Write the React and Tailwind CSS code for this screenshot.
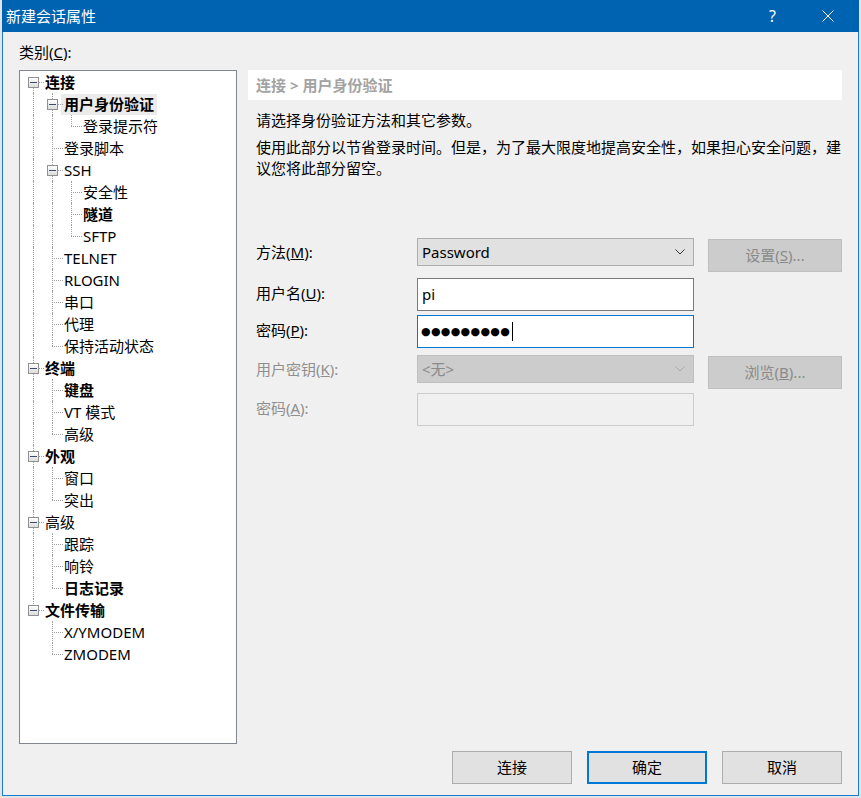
import { Fragment } from 'react'

const TREE = [
  {
    t: '连接', b: true, c: [
      { t: '用户身份验证', b: true, sel: true, c: [{ t: '登录提示符' }] },
      { t: '登录脚本' },
      { t: 'SSH', c: [{ t: '安全性' }, { t: '隧道', b: true }, { t: 'SFTP' }] },
      { t: 'TELNET' },
      { t: 'RLOGIN' },
      { t: '串口' },
      { t: '代理' },
      { t: '保持活动状态' },
    ],
  },
  { t: '终端', b: true, c: [{ t: '键盘', b: true }, { t: 'VT 模式' }, { t: '高级' }] },
  { t: '外观', b: true, c: [{ t: '窗口' }, { t: '突出' }] },
  { t: '高级', c: [{ t: '跟踪' }, { t: '响铃' }, { t: '日志记录', b: true }] },
  { t: '文件传输', b: true, c: [{ t: 'X/YMODEM' }, { t: 'ZMODEM' }] },
]

// guide x per level, box x per level, label padding per level
const LINE_X = ['left-[13px]', 'left-[32px]', 'left-[51px]']
const BOX_X = ['left-[8px]', 'left-[27px]', 'left-[46px]']
const PAD = ['pl-[22px]', 'pl-[41px]', 'pl-[60px]']

const DOT = 'border-dotted border-[#a0a0a0]'

function flatten(nodes, level, cont, out) {
  nodes.forEach((n, i) => {
    const last = i === nodes.length - 1
    out.push({ ...n, level, last, first: level === 0 && i === 0, cont })
    if (n.c) flatten(n.c, level + 1, [...cont, !last], out)
  })
  return out
}

function TreeRow({ r }) {
  const own = r.first ? 'top-[11px] h-[11px]' : r.last ? 'top-0 h-[11px]' : 'top-0 h-[22px]'
  return (
    <div className="relative h-[22px] flex items-center">
      {r.cont.map((c, k) =>
        c ? <span key={k} className={`absolute top-0 h-[22px] border-l ${DOT} ${LINE_X[k]}`} /> : null
      )}
      <span className={`absolute border-l ${DOT} ${own} ${LINE_X[r.level]}`} />
      <span className={`absolute top-[11px] w-[11px] border-t ${DOT} ${LINE_X[r.level]}`} />
      {r.c && (
        <span
          className={`absolute top-[6px] w-[11px] h-[11px] border border-[#919191] bg-gradient-to-b from-white to-[#dcdcdc] flex items-center justify-center ${BOX_X[r.level]}`}
        >
          <span className="w-[7px] h-px bg-[#3a4c6e]" />
        </span>
      )}
      <div className={PAD[r.level]}>
        <span
          className={`block px-[3px] leading-[21px] whitespace-nowrap ${r.b ? 'font-bold' : ''} ${
            r.sel ? 'bg-[#ebebeb]' : ''
          }`}
        >
          {r.t}
        </span>
      </div>
    </div>
  )
}

function Chevron({ color = '#333' }) {
  return (
    <svg width="10" height="6" viewBox="0 0 10 6" className="mr-[8px]">
      <path d="M0.5 0.5 L5 5 L9.5 0.5" fill="none" stroke={color} strokeWidth="1" />
    </svg>
  )
}

function Label({ children, disabled, h }) {
  return (
    <div className={`w-[169px] pl-[8px] flex items-center ${h} ${disabled ? 'text-[#8f8f8f]' : ''}`}>
      {children}
    </div>
  )
}

function Btn({ children, primary, disabled, className = '' }) {
  const tone = disabled
    ? 'bg-[#cccccc] border border-[#bfbfbf] text-[#8a8a8a]'
    : primary
      ? 'bg-[#e1e1e1] border-2 border-[#0078d7]'
      : 'bg-[#e1e1e1] border border-[#adadad]'
  return <div className={`flex items-center justify-center ${tone} ${className}`}>{children}</div>
}

export default function App() {
  const rows = flatten(TREE, 0, [], [])
  return (
    <div className="w-[861px] h-[798px] overflow-hidden bg-[#e4e4e4] text-[15px] text-black font-['Noto_Sans','Noto_Sans_CJK_SC',sans-serif]">
      <div className="ml-[2px] w-[857px] h-[796px] flex flex-col border-x border-b border-[#1c7ad0] bg-[#f0f0f0]">
        {/* Title bar */}
        <div className="h-[32px] -mx-px bg-[#0063b1] flex items-center text-white">
          <span className="pl-[4px]">新建会话属性</span>
          <span className="ml-auto text-[16px]">?</span>
          <svg width="12" height="12" viewBox="0 0 12 12" className="ml-[46px] mr-[25px]">
            <path d="M0.5 0.5 L11.5 11.5 M11.5 0.5 L0.5 11.5" stroke="white" strokeWidth="1" />
          </svg>
        </div>

        <div className="flex-1 flex flex-col px-[16px] pt-[10px]">
          <div className="h-[21px] leading-[21px]">
            类别(<u>C</u>):
          </div>

          <div className="mt-[7px] h-[674px] flex gap-[11px]">
            {/* Category tree */}
            <div className="w-[218px] h-full border border-[#828790] bg-white">
              {rows.map((r, i) => (
                <Fragment key={i}>
                  <TreeRow r={r} />
                </Fragment>
              ))}
            </div>

            {/* Settings panel */}
            <div className="w-[594px] flex flex-col">
              <div className="h-[30px] bg-white flex items-center pl-[8px] font-bold text-[#a3a3a3]">
                连接 &gt; 用户身份验证
              </div>
              <div className="pl-[8px] mt-[10px] leading-[21px]">请选择身份验证方法和其它参数。</div>
              <div className="pl-[8px] mt-[6px] w-[594px] leading-[21px]">
                使用此部分以节省登录时间。但是，为了最大限度地提高安全性，如果担心安全问题，建议您将此部分留空。
              </div>

              <div className="mt-[59px] flex flex-col">
                <div className="h-[40px] flex items-start">
                  <Label h="h-[29px]">
                    方法(<u>M</u>):
                  </Label>
                  <div className="w-[277px] h-[28px] bg-[#e1e1e1] border border-[#adadad] flex items-center justify-between pl-[4px]">
                    <span>Password</span>
                    <Chevron />
                  </div>
                  <Btn disabled className="ml-[14px] mt-px w-[134px] h-[33px]">
                    设置(<u>S</u>)...
                  </Btn>
                </div>

                <div className="h-[37px] flex items-start">
                  <Label h="h-[31px]">
                    用户名(<u>U</u>):
                  </Label>
                  <div className="w-[277px] h-[33px] bg-white border border-[#7a7a7a] flex items-center pl-[4px]">
                    pi
                  </div>
                </div>

                <div className="h-[40px] flex items-start">
                  <Label h="h-[31px]">
                    密码(<u>P</u>):
                  </Label>
                  <div className="w-[277px] h-[33px] bg-white border border-[#0078d7] flex items-center pl-[3px]">
                    <span className="font-['DejaVu_Sans',sans-serif] text-[11px] tracking-[0.3px] leading-none">
                      ●●●●●●●●●
                    </span>
                    <span className="w-px h-[19px] bg-black ml-[2px]" />
                  </div>
                </div>

                <div className="h-[38px] flex items-start">
                  <Label disabled h="h-[29px]">
                    用户密钥(<u>K</u>):
                  </Label>
                  <div className="w-[277px] h-[28px] bg-[#cccccc] border border-[#bfbfbf] flex items-center justify-between pl-[4px] text-[#8a8a8a]">
                    <span>&lt;无&gt;</span>
                    <Chevron color="#a8a8a8" />
                  </div>
                  <Btn disabled className="ml-[14px] mt-px w-[134px] h-[33px]">
                    浏览(<u>B</u>)...
                  </Btn>
                </div>

                <div className="h-[33px] flex items-start">
                  <Label disabled h="h-[31px]">
                    密码(<u>A</u>):
                  </Label>
                  <div className="w-[277px] h-[33px] bg-[#f0f0f0] border border-[#cccccc]" />
                </div>
              </div>
            </div>
          </div>

          {/* Dialog buttons */}
          <div className="mt-[7px] flex justify-end gap-[15px]">
            <Btn className="w-[120px] h-[33px]">连接</Btn>
            <Btn primary className="w-[120px] h-[33px]">确定</Btn>
            <Btn className="w-[120px] h-[33px]">取消</Btn>
          </div>
        </div>
      </div>
    </div>
  )
}
